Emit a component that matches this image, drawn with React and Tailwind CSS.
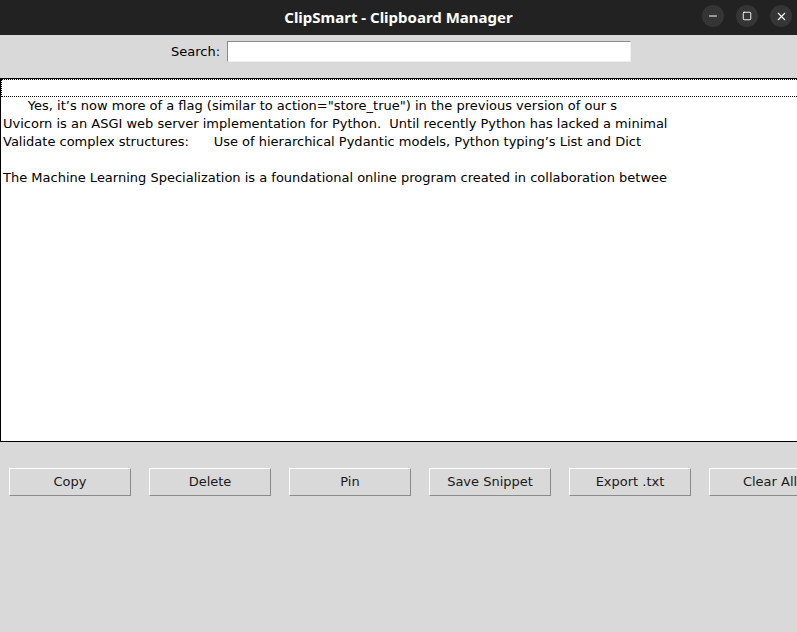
import { X, Minus, Square } from "lucide-react";

const rows = [
  "",
  "      Yes, it’s now more of a flag (similar to action=\"store_true\") in the previous version of our s",
  "Uvicorn is an ASGI web server implementation for Python.  Until recently Python has lacked a minimal",
  "Validate complex structures:      Use of hierarchical Pydantic models, Python typing’s List and Dict",
  "",
  "The Machine Learning Specialization is a foundational online program created in collaboration betwee",
];

const buttons = ["Copy", "Delete", "Pin", "Save Snippet", "Export .txt", "Clear All"];

const TitleBar = () => (
  <header className="h-[35px] bg-[#222222] flex items-center relative">
    <h1 className="w-full text-center text-white font-bold text-[15px] font-['Noto_Sans',sans-serif]">
      ClipSmart - Clipboard Manager
    </h1>
    <div className="absolute right-[5px] top-[5px] flex gap-[12px]">
      <span className="w-[22px] h-[22px] rounded-full bg-[#353535] flex items-center justify-center text-white">
        <Minus size={12} strokeWidth={2} />
      </span>
      <span className="w-[22px] h-[22px] rounded-full bg-[#353535] flex items-center justify-center text-white">
        <Square size={10} strokeWidth={2.2} />
      </span>
      <span className="w-[22px] h-[22px] rounded-full bg-[#353535] flex items-center justify-center text-white">
        <X size={13} strokeWidth={2} />
      </span>
    </div>
  </header>
);

export default function App() {
  return (
    <div className="w-[797px] h-[632px] overflow-hidden bg-[#d9d9d9] font-['DejaVu_Sans',sans-serif] text-[13px] text-black">
      <TitleBar />

      <div className="flex items-center justify-center gap-[7px] h-[32px] pt-[1px] pl-[5px]">
        <span>Search:</span>
        <div className="w-[404px] h-[21px] bg-white border-t border-l border-[#8a8a8a] border-r border-b border-r-[#f0f0f0] border-b-[#f0f0f0]" />
      </div>

      <div className="mt-[11px] w-[830px] h-[364px] bg-white border border-black overflow-hidden">
        {rows.map((r, i) => (
          <div
            key={i}
            className={`h-[18px] leading-[18px] pl-[2px] whitespace-pre ${i === 0 ? "border border-dotted border-black" : ""}`}
          >
            {r}
          </div>
        ))}
      </div>

      <div className="flex gap-[18px] pl-[9px] mt-[26px]">
        {buttons.map((b) => (
          <button
            key={b}
            className="shrink-0 w-[122px] h-[28px] bg-[#d9d9d9] border border-t-white border-l-white border-r-[#8a8a8a] border-b-[#8a8a8a] text-[#1a1a1a]"
          >
            {b}
          </button>
        ))}
      </div>
    </div>
  );
}
